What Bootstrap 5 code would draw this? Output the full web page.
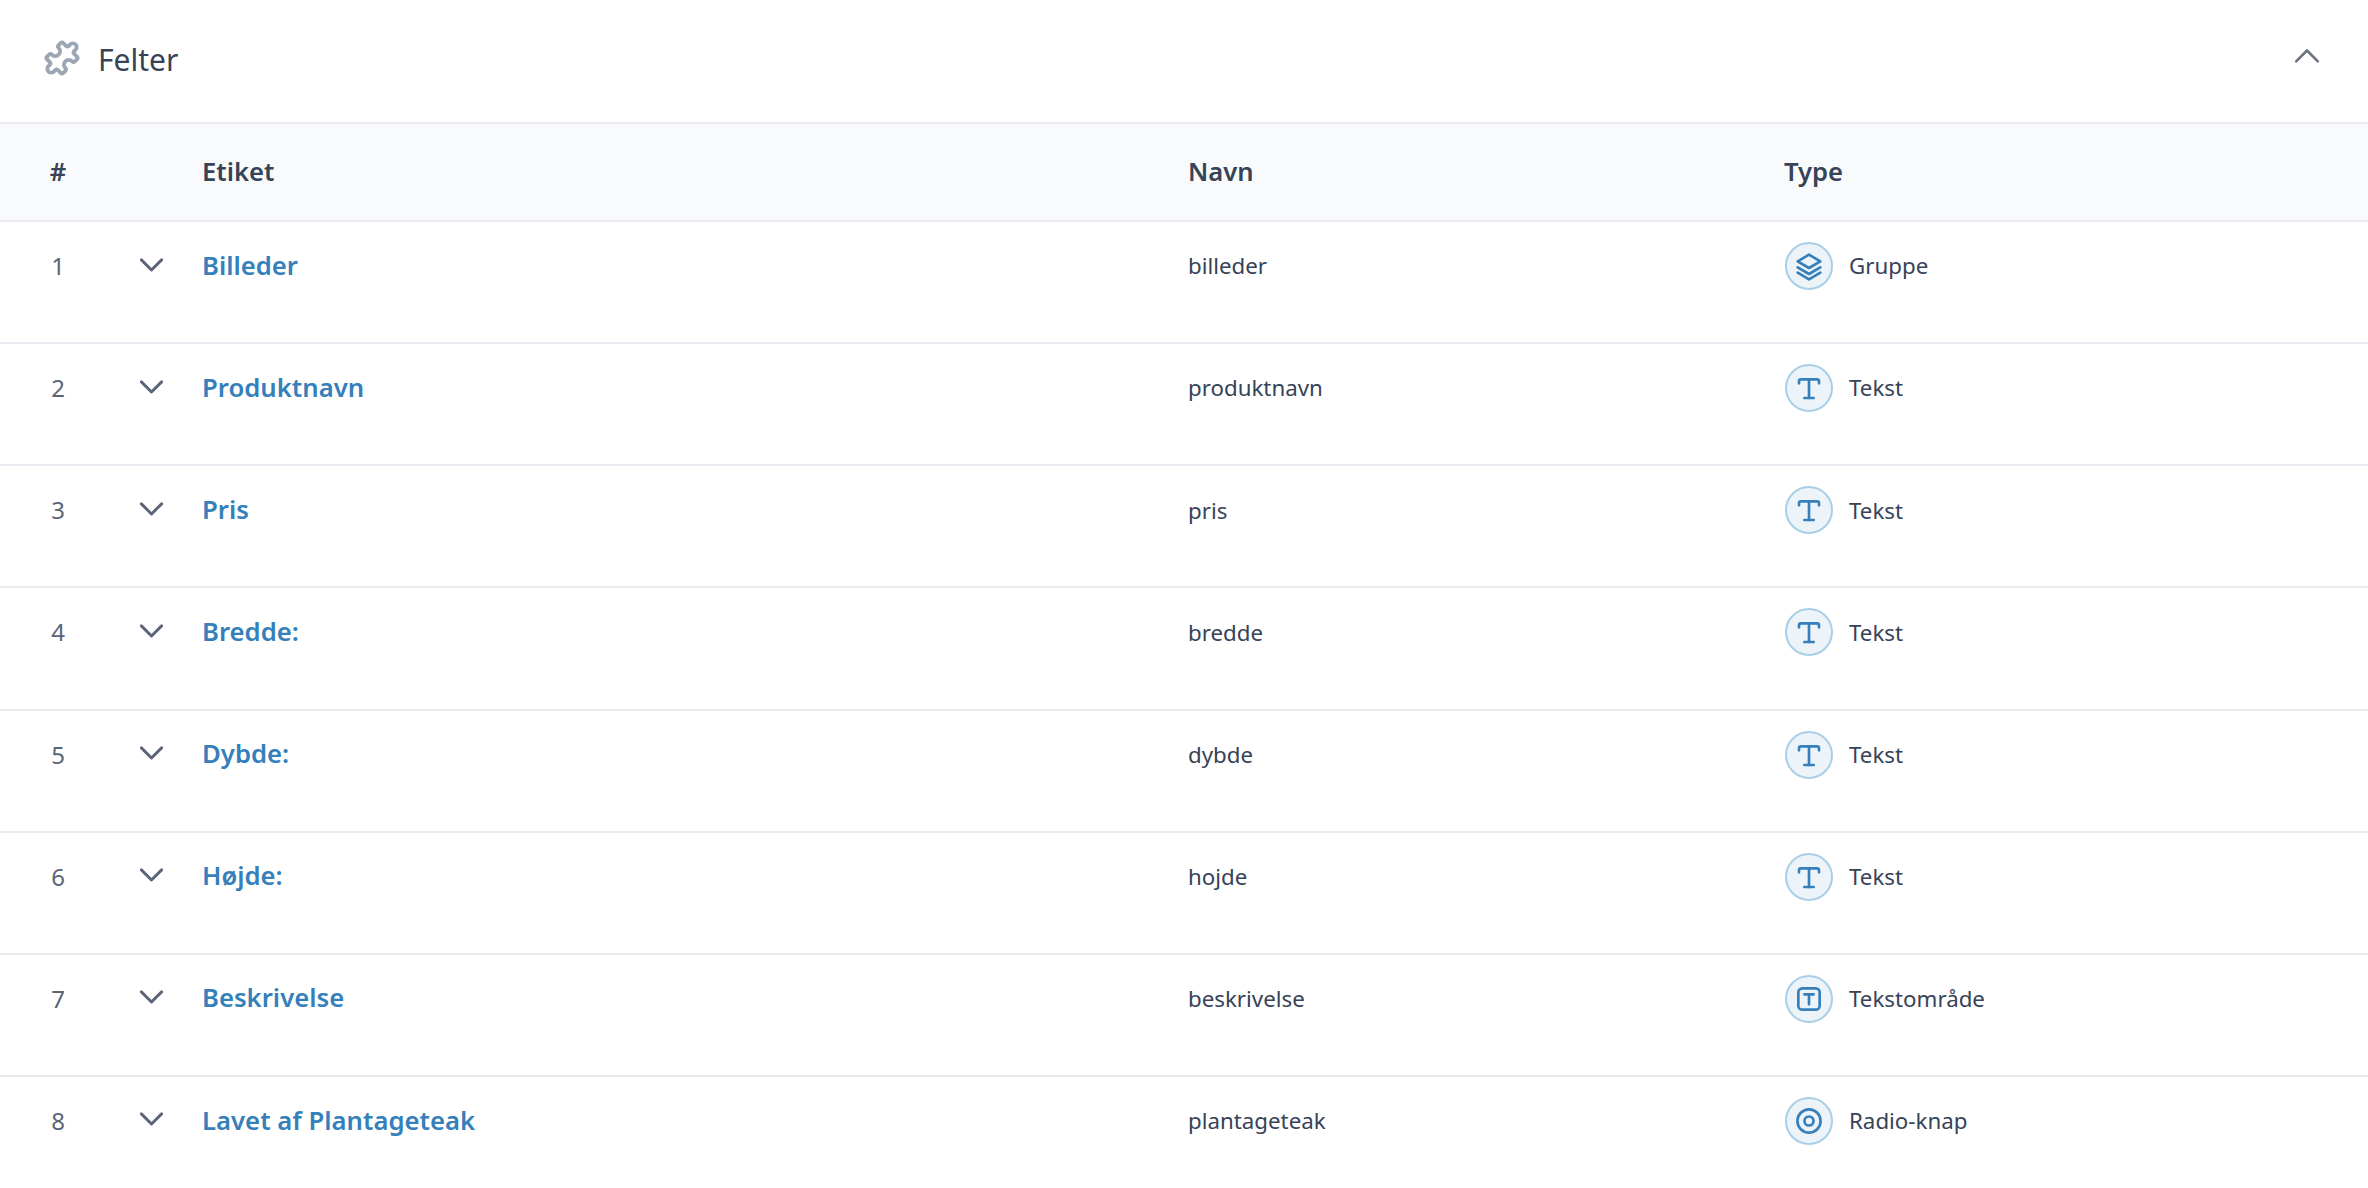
<!DOCTYPE html>
<html lang="da">
<head>
    <meta charset="UTF-8">
    <title>Felter</title>
    <link href="https://cdn.jsdelivr.net/npm/bootstrap@5.3.0/dist/css/bootstrap.min.css" rel="stylesheet">
    <style>
        html, body { overflow: hidden; height: 100%; }
        body {
            font-family: "Noto Sans", "Open Sans", sans-serif;
            font-size: 22.3px;
            color: #374357;
            background: #fff;
        }
        .panel-head {
            height: 122px;
            padding: 0 48px 3px 39px;
        }
        .panel-title { font-size: 30px; color: #374357; font-weight: 400; margin: 0; }
        .puzzle { width: 46px; height: 46px; margin-right: 13px; margin-bottom: 4px; color: #9ca5b4; }
        .collapse-btn { width: 26px; height: 26px; color: #6b7280; padding: 0; border: 0; background: none; display: flex; margin-bottom: 6px; }
        .fields-table { table-layout: fixed; width: 100%; margin: 0; }
        .fields-table > :not(caption) > * > * { padding: 0; border-color: #e8eaef; border-bottom-width: 2px; color: #374357; box-shadow: none; }
        .fields-table thead tr > * {
            background: #f9fafb;
            height: 98px;
            padding-top: 1px;
            font-size: 25.6px;
            font-weight: 600;
            vertical-align: middle;
            border-top: 2px solid #e8eaef;
        }
        .fields-table tbody td { height: 122.14px; vertical-align: top; padding-top: 20px; }
        .fields-table tbody tr:last-child td { border-bottom: 0; }
        .col-num { width: 116px; text-align: center; }
        .col-toggle { width: 86px; }
        .col-label { width: 986px; }
        .col-name { width: 596px; }
        .cell-line { height: 48px; }
        .row-num { color: #5b6577; font-size: 24px; }
        .chevron { width: 27px; height: 27px; color: #5b6577; margin-left: 22px; margin-top: -2px; }
        .field-link { color: #357fbb; font-size: 25.7px; font-weight: 600; text-decoration: none; }
        .type-circle {
            width: 48px; height: 48px; margin-right: 16px; margin-left: 1px;
            background: #edf4f9; border: 2px solid #a9cfe6;
            color: #357fbb;
        }
        .type-circle svg { width: 32px; height: 32px; }
    </style>
</head>
<body>
    <div class="panel-head d-flex align-items-center">
        <svg class="puzzle flex-shrink-0" viewBox="0 0 24 24" fill="none" stroke="currentColor" stroke-width="2" stroke-linecap="round" stroke-linejoin="round"><path transform="rotate(45 12 12)" d="M7 6h2a1 1 0 001-1V4a2 2 0 114 0v1a1 1 0 001 1h2a1 1 0 011 1v1.5a1 1 0 01-1 1a2.5 2.5 0 100 5a1 1 0 011 1V17a1 1 0 01-1 1h-2a1 1 0 00-1 1v1a2 2 0 11-4 0v-1a1 1 0 00-1-1H7a1 1 0 01-1-1v-1.5a1 1 0 011-1a2.5 2.5 0 100-5a1 1 0 01-1-1V7a1 1 0 011-1z"/></svg>
        <h2 class="panel-title">Felter</h2>
        <button class="collapse-btn ms-auto" type="button" aria-label="Skjul">
            <svg viewBox="0 0 24 24" fill="none" stroke="currentColor" stroke-width="2.4" stroke-linecap="round" stroke-linejoin="round"><path d="M2 16L12 6l10 10"/></svg>
        </button>
    </div>

    <table class="table fields-table">
        <thead>
            <tr>
                <th class="col-num">#</th>
                <th class="col-toggle"></th>
                <th class="col-label">Etiket</th>
                <th class="col-name">Navn</th>
                <th>Type</th>
            </tr>
        </thead>
        <tbody id="rows"></tbody>
    </table>

    <script src="https://cdn.jsdelivr.net/npm/bootstrap@5.3.0/dist/js/bootstrap.bundle.min.js"></script>
    <script>
        const icons = {
            group: '<path d="M12 3.5l8.5 5-8.5 5-8.5-5z"/><path d="M3.5 13l8.5 5 8.5-5"/><path d="M3.5 17l8.5 5 8.5-5"/>',
            text: '<path d="M4.5 8.5V7A1.5 1.5 0 016 5.5h12A1.5 1.5 0 0119.5 7v1.5"/><path d="M12 5.5v14"/><path d="M8.5 19.5h7"/>',
            area: '<rect x="4" y="4" width="16" height="16" rx="3"/><path d="M8.5 8.5h7M12 8.5v7.5"/>',
            radio: '<circle cx="12" cy="12" r="8.7"/><circle cx="12" cy="12" r="3.4"/>'
        };
        const fields = [
            ['Billeder', 'billeder', 'group', 'Gruppe'],
            ['Produktnavn', 'produktnavn', 'text', 'Tekst'],
            ['Pris', 'pris', 'text', 'Tekst'],
            ['Bredde:', 'bredde', 'text', 'Tekst'],
            ['Dybde:', 'dybde', 'text', 'Tekst'],
            ['Højde:', 'hojde', 'text', 'Tekst'],
            ['Beskrivelse', 'beskrivelse', 'area', 'Tekstområde'],
            ['Lavet af Plantageteak', 'plantageteak', 'radio', 'Radio-knap']
        ];
        document.getElementById('rows').innerHTML = fields.map((f, i) => `
            <tr>
                <td class="col-num"><div class="cell-line d-flex align-items-center justify-content-center row-num">${i + 1}</div></td>
                <td><div class="cell-line d-flex align-items-center">
                    <svg class="chevron" viewBox="0 0 24 24" fill="none" stroke="currentColor" stroke-width="2.6" stroke-linecap="round" stroke-linejoin="round"><path d="M3 7l9 9 9-9"/></svg>
                </div></td>
                <td><div class="cell-line d-flex align-items-center"><a class="field-link" href="#">${f[0]}</a></div></td>
                <td><div class="cell-line d-flex align-items-center">${f[1]}</div></td>
                <td><div class="cell-line d-flex align-items-center">
                    <span class="type-circle rounded-circle d-flex align-items-center justify-content-center">
                        <svg viewBox="0 0 24 24" fill="none" stroke="currentColor" stroke-width="2" stroke-linecap="round" stroke-linejoin="round">${icons[f[2]]}</svg>
                    </span>${f[3]}
                </div></td>
            </tr>`).join('');
    </script>
</body>
</html>
